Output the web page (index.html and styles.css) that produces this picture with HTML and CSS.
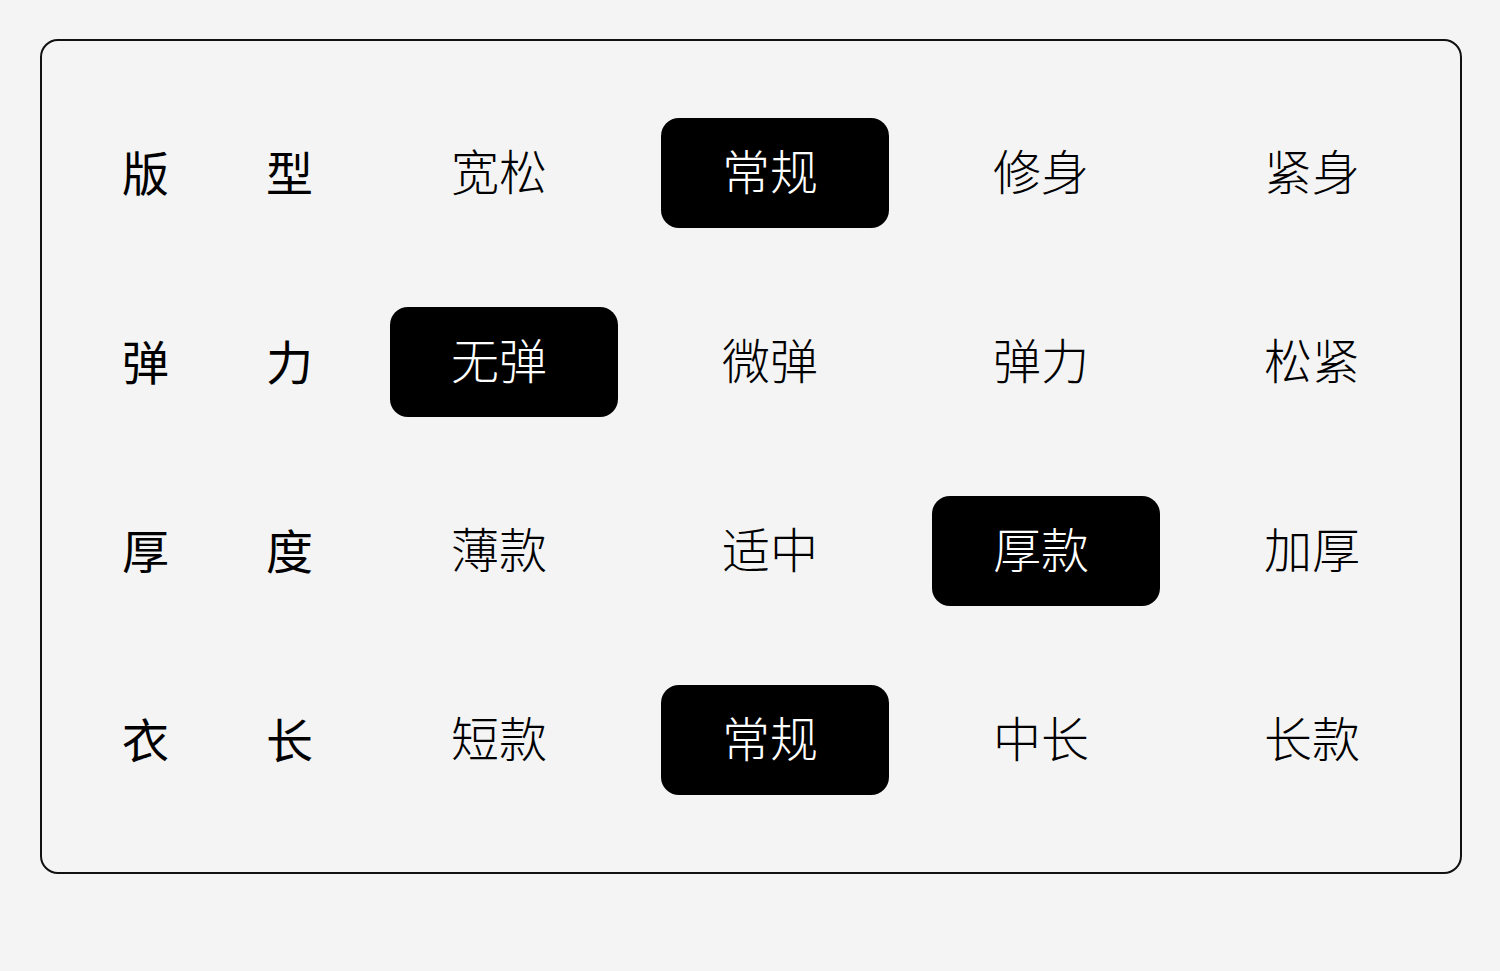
FILE: index.html
```html
<!DOCTYPE html>
<html lang="zh-CN">
<head>
<meta charset="utf-8">
<title>尺码信息</title>
<link rel="stylesheet" href="styles.css">
</head>
<body>
<div class="card">
  <div class="row">
    <div class="label"><span>版</span><span>型</span></div>
    <div class="opt">宽松</div>
    <div class="opt active">常规</div>
    <div class="opt">修身</div>
    <div class="opt">紧身</div>
  </div>
  <div class="row">
    <div class="label"><span>弹</span><span>力</span></div>
    <div class="opt active">无弹</div>
    <div class="opt">微弹</div>
    <div class="opt">弹力</div>
    <div class="opt">松紧</div>
  </div>
  <div class="row">
    <div class="label"><span>厚</span><span>度</span></div>
    <div class="opt">薄款</div>
    <div class="opt">适中</div>
    <div class="opt active">厚款</div>
    <div class="opt">加厚</div>
  </div>
  <div class="row">
    <div class="label"><span>衣</span><span>长</span></div>
    <div class="opt">短款</div>
    <div class="opt active">常规</div>
    <div class="opt">中长</div>
    <div class="opt">长款</div>
  </div>
</div>
</body>
</html>
```
FILE: styles.css
```css
html, body {
  margin: 0;
  padding: 0;
  background: #f4f4f4;
}
body {
  padding: 39px 0 0 40px;
  font-family: "Noto Sans CJK SC", "Noto Sans", sans-serif;
}
.card {
  box-sizing: border-box;
  width: 1422px;
  height: 835px;
  border: 2px solid #111;
  border-radius: 18px;
  padding: 77px 0 0 80px;
  display: flex;
  flex-direction: column;
  gap: 79px;
}
.row {
  display: grid;
  grid-template-columns: 225px repeat(4, 228px);
  column-gap: 43px;
  height: 110px;
  align-items: center;
}
.label {
  width: 191px;
  display: flex;
  justify-content: space-between;
  font-size: 47px;
  font-weight: 400;
  color: #000;
  line-height: 1;
  padding-bottom: 6px;
}
.opt {
  box-sizing: border-box;
  height: 110px;
  border-radius: 18px;
  display: flex;
  align-items: center;
  justify-content: center;
  font-size: 48px;
  font-weight: 200;
  color: #000;
  line-height: 1;
  padding: 0 10px 8px 0;
}
.opt.active {
  background: #000;
  color: #fff;
}
```
